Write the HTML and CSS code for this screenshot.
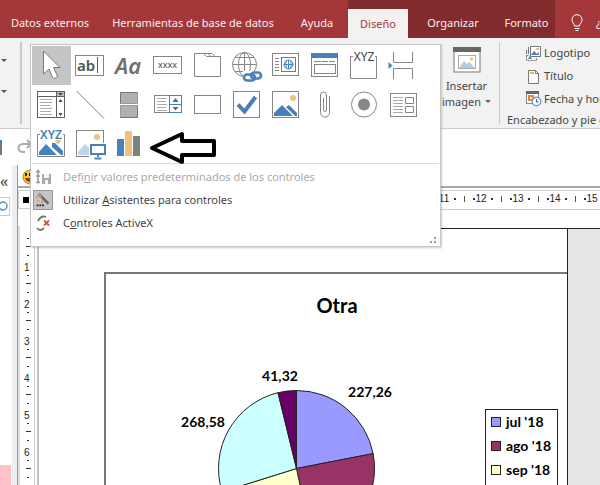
FILE: index.html
```html
<!DOCTYPE html>
<html lang="es">
<head>
<meta charset="utf-8">
<title>Diseño de informe</title>
<link rel="stylesheet" href="styles.css">
</head>
<body>
<nav class="tabs">
  <button class="tab">Datos externos</button>
  <button class="tab">Herramientas de base de datos</button>
  <button class="tab">Ayuda</button>
  <button class="tab active">Diseño</button>
  <button class="tab context">Organizar</button>
  <button class="tab context">Formato</button>
  <button class="tab tell"><svg width="12" height="18" viewBox="0 0 12 18"><path d="M3.5 12C3.5 9.500 1 9 1 5.700A5 5 0 0 1 11 5.700C11 9 8.500 9.500 8.500 12ZM3.500 14.500H8.500M4.500 16.500H7.500"/></svg><span>¿</span></button>
</nav>

<section class="ribbon">
  <div class="group-left">
    <svg width="8" height="4" viewBox="0 0 8 4"><path d="M1 0H7L4 3Z"/></svg>
    <svg width="8" height="4" viewBox="0 0 8 4"><path d="M1 0H7L4 3Z"/></svg>
  </div>
  <div></div>
  <button class="insert">
    <svg width="28" height="26" viewBox="0 0 28 26"><rect x="1" y="1" width="26" height="24" fill="#fff" stroke="#777"/><path d="M0 0H28V5H0Z" fill="#666"/><rect x="5.500" y="8.500" width="17" height="13" fill="#fff" stroke="#aaa"/><path d="M6 21L11 14L14 17L16 15L22 21Z" fill="#b5cbe3"/><circle cx="18.500" cy="12" r="1.700" fill="#edc27c"/></svg>
    <span>Insertar</span>
    <span>imagen <svg width="6" height="4" viewBox="0 0 6 4"><path d="M0 0H6L3 3Z" fill="#666"/></svg></span>
  </button>
  <div class="group-head">
    <button><svg width="17" height="17" viewBox="0 0 17 17"><path d="M5.500 1.500V11.500H15.500V1.500Z" fill="#fff" stroke="#777"/><path d="M3.500 2V9M1.500 5V9" stroke="#777" fill="none"/><path d="M6 10L9 6L12 9L14 7V10Z" fill="#4780ba"/><circle cx="12.500" cy="4" r="1.300" fill="#edb35c"/><path d="M1.500 10.500V15.500H11.500V13M1.500 10.500H4" fill="none" stroke="#777" stroke-dasharray="2 1"/><path d="M3 14L5 11L7 14Z" fill="#4780ba"/></svg>Logotipo</button>
    <button><svg width="17" height="17" viewBox="0 0 17 17"><path d="M3.500 2.500H10.500L13.500 5.500V15.500H3.500Z" fill="#fff" stroke="#777"/><path d="M10.500 2.500V5.500H13.500" fill="none" stroke="#777"/><path d="M5 4H9V6H5Z" fill="#edb35c"/></svg>Título</button>
    <button><svg width="17" height="17" viewBox="0 0 17 17"><rect x="1.500" y="2.500" width="12" height="11" fill="#fff" stroke="#888"/><path d="M1 1H14V4H1Z" fill="#666"/><rect x="4" y="6" width="4" height="4" fill="#fff" stroke="#e5843e" stroke-width="2"/><circle cx="11.500" cy="11.500" r="4.300" fill="#fff" stroke="#6f9ccb" stroke-width="1.400"/><path d="M11.500 9V12H13.500" fill="none" stroke="#555"/></svg>Fecha y hora</button>
    <p>Encabezado y pie de página</p>
  </div>
</section>

<div class="quickbar">
  <i class="chip"></i>
  <svg width="18" height="16" viewBox="0 0 18 16"><path d="M11 1L15 5L11 9M15 5H7C1 5 1 13 7 13H9" fill="none" stroke="#aaa" stroke-width="2"/></svg>
</div>

<main class="workspace">
  <aside class="pane">
    <button class="collapse" aria-label="Contraer panel">«</button>
    <div class="search"><svg width="10" height="12" viewBox="0 0 10 12"><circle cx="3" cy="6" r="4" fill="none" stroke="#5b8dc0" stroke-width="1.500"/></svg></div>
    <div class="pane-item"></div>
  </aside>
  <section class="document">
    <div class="doc-tab"><svg width="16" height="16" viewBox="0 0 16 16"><circle cx="8" cy="8" r="7" fill="#f8ca27" stroke="#b18217"/><path d="M4 4V7M8 4V7" stroke="#222" stroke-width="2"/><path d="M3 9C4 14 11 14 13 9Z" fill="#a42920"/></svg></div>
    <div class="ruler-row">
      <i class="select-box"></i>
      <div class="ruler-h"><span>11</span><span>12</span><span>13</span><span>14</span><span>15</span></div>
    </div>
    <div class="sheet">
      <div class="ruler-v"><span>&nbsp;</span><span>1</span><span>2</span><span>3</span><span>4</span><span>5</span><span>6</span></div>
      <div class="report">
        <div class="page">
          <figure class="chart">
            <h1>Otra</h1>
            <svg class="pie" width="379" height="170" viewBox="0 0 379 170">
              <g stroke="#222" stroke-width="1">
                <path d="M190.500 128.500V50.500A78 78 0 0 1 267.100 113.600Z" fill="#9999ff"/>
                <path d="M190.500 128.500L267.100 113.600A78 78 0 0 1 206.700 204.800Z" fill="#993366"/>
                <path d="M190.500 128.500L206.700 204.800A78 78 0 0 1 116.100 151.800Z" fill="#ffffcc"/>
                <path d="M190.500 128.500L116.100 151.800A78 78 0 0 1 172 52.700Z" fill="#ccffff"/>
                <path d="M190.500 128.500L172 52.700A78 78 0 0 1 190.500 50.500Z" fill="#660066"/>
              </g>
              <text x="174" y="41">41,32</text>
              <text x="264" y="57">227,26</text>
              <text x="97" y="87">268,58</text>
            </svg>
            <ul class="legend">
              <li><i class="key jul"></i>jul '18</li>
              <li><i class="key ago"></i>ago '18</li>
              <li><i class="key sep"></i>sep '18</li>
            </ul>
          </figure>
        </div>
      </div>
    </div>
  </section>
</main>

<div class="menu">
  <div class="gallery">
    <button class="on" aria-label="Seleccionar"><svg viewBox="0 0 39 39"><path d="M11.500 5V28L17 23L20.500 31.500Q23 34 25.500 30L21.500 21.500H28Z" fill="#fff" stroke="#777"/></svg></button>
    <button aria-label="Cuadro de texto"><svg viewBox="0 0 39 39"><rect class="o" x="4.500" y="9.500" width="28" height="20"/><text x="6" y="25" font-size="15" font-weight="600" fill="#555">ab</text><path class="o dark" d="M26.500 11V27"/></svg></button>
    <button aria-label="Etiqueta"><svg viewBox="0 0 39 39"><text x="5" y="28" font-size="22" font-weight="600" font-style="italic" fill="#707070">Aa</text></svg></button>
    <button aria-label="Botón"><svg viewBox="0 0 39 39"><rect class="o" x="4.500" y="10.500" width="28" height="17"/><text x="18.500" y="22" font-size="9" text-anchor="middle" fill="#444">xxxx</text></svg></button>
    <button aria-label="Control de pestaña"><svg viewBox="0 0 39 39"><path class="o" d="M6.500 30.500V7.500H15.500L18.500 10.500H32.500V30.500ZM15.500 7.500H20L23 10.500M20 7.500H24L27 10.500"/></svg></button>
    <button aria-label="Hipervínculo"><svg viewBox="0 0 39 39"><g class="o"><circle cx="17.500" cy="18.500" r="12"/><ellipse cx="17.500" cy="18.500" rx="6" ry="12"/><path d="M17.500 6.500V30M5.500 18.500H29.500M8 11.500H27M8 25.500H20"/></g><path d="M16 25H36V36H16Z" fill="#fff"/><g fill="none" stroke="#4780ba" stroke-width="2.600"><rect x="17" y="28.500" width="11" height="6" rx="3"/><rect x="24" y="26.500" width="10" height="6" rx="3"/></g></svg></button>
    <button aria-label="Explorador web"><svg viewBox="0 0 39 39"><rect class="o" x="6.500" y="7.500" width="26" height="22"/><path class="o" d="M9 12.500H13M9 15.500H13M9 18.500H13M9 21.500H13M9 24.500H13"/><rect class="b" x="15.500" y="11.500" width="14" height="14"/><circle class="b" cx="22.500" cy="18.500" r="4.500"/><path class="b" d="M22.500 14V23M18 18.500H27M20.500 15C19.500 17 19.500 20 20.500 22M24.500 15C25.500 17 25.500 20 24.500 22"/></svg></button>
    <button aria-label="Control de navegación"><svg viewBox="0 0 39 39"><rect class="o" x="6.500" y="7.500" width="26" height="23"/><path d="M6 7H33V12H6Z" fill="#4780ba"/><path class="o" d="M9 15.500H16M17 15.500H23M24 15.500H30"/><rect class="o" x="9.500" y="18.500" width="21" height="9"/></svg></button>
    <button aria-label="Grupo de opciones"><svg viewBox="0 0 39 39"><path class="o" d="M9 10.500H6.500V32.500H32.500V10.500H31"/><text x="20" y="15" font-size="12" text-anchor="middle" fill="#444">XYZ</text></svg></button>
    <button aria-label="Salto de página"><svg viewBox="0 0 39 39"><path class="o" d="M10.500 6V16.500H29.500V6M10.500 33V22.500H29.500V33"/><path d="M5.500 16L9.500 19.500L5.500 23Z" fill="#4780ba"/></svg></button>
    <button aria-label="Cuadro combinado"><svg viewBox="0 0 39 39"><rect class="o dark" x="5.500" y="6.500" width="27" height="26"/><path class="o dark" d="M5.500 11.500H32.500M24.500 6.500V32.500"/><path d="M25 7H32V11H25Z" fill="#bbb"/><path d="M26 8H31L28.500 10.500ZM26.500 17H30.500L28.500 14ZM26.500 28H30.500L28.500 31Z" fill="#444"/><path class="o soft" d="M8 14.500H20M8 17.500H20M8 20.500H18M8 23.500H20M8 26.500H19M8 29.500H20"/></svg></button>
    <button aria-label="Línea"><svg viewBox="0 0 39 39"><path class="o" d="M5.500 6L33 33.500"/></svg></button>
    <button aria-label="Botón de alternar"><svg viewBox="0 0 39 39"><path d="M10.500 7.500H27.500V18.500H10.500ZM10.500 20.500H27.500V32.500H10.500Z" fill="#b0b0b0" stroke="#999"/><path d="M10.500 18.500V7.500H27.500M10.500 32.500H27.500V20.500" fill="none" stroke="#777"/></svg></button>
    <button aria-label="Cuadro de lista"><svg viewBox="0 0 39 39"><rect class="o" x="5.500" y="10.500" width="27" height="17"/><path class="o soft" d="M8 13.500H18M8 16.500H17M8 19.500H18M8 22.500H17M8 25.500H18"/><path class="b" d="M20.500 10.500H32.500V27.500H20.500ZM20.500 19.500H32.500"/><path d="M23.500 17H29.500L26.500 13ZM23.500 22H29.500L26.500 25.500Z" fill="#666"/></svg></button>
    <button aria-label="Rectángulo"><svg viewBox="0 0 39 39"><rect class="o" x="6.500" y="10.500" width="26" height="18"/></svg></button>
    <button aria-label="Casilla"><svg viewBox="0 0 39 39"><rect class="o" x="6.500" y="6.500" width="26" height="26"/><path d="M11 19.500L17.500 26.500L28.500 12" fill="none" stroke="#4780ba" stroke-width="4"/></svg></button>
    <button aria-label="Marco de objeto"><svg viewBox="0 0 39 39"><rect class="o" x="6.500" y="6.500" width="26" height="26"/><path d="M8 31V28L16 20L27 31ZM20 22L23 20L31 28V31H29Z" fill="#4780ba"/><circle cx="27" cy="13" r="3" fill="#edc27c"/></svg></button>
    <button aria-label="Datos adjuntos"><svg viewBox="0 0 39 39"><path class="o" d="M24.500 11V27.500A4.500 4.500 0 0 1 15.500 27.500V10A3 3 0 0 1 21.500 10V25A1.500 1.500 0 0 1 18.500 25V13"/></svg></button>
    <button aria-label="Botón de opción"><svg viewBox="0 0 39 39"><circle class="o" cx="20" cy="19.500" r="12.500"/><circle cx="20" cy="19.500" r="6" fill="#888"/></svg></button>
    <button aria-label="Subformulario"><svg viewBox="0 0 39 39"><rect class="o" x="7.500" y="8.500" width="26" height="23"/><path class="o soft" d="M10 12.500H20M10 15.500H20M10 18.500H20M10 21.500H20M10 24.500H20M10 27.500H20"/><path class="o" d="M22.500 12.500H30.500V18.500H22.500ZM22.500 21.500H30.500V27.500H22.500Z"/></svg></button>
    <button aria-label="Marco independiente"><svg viewBox="0 0 39 39"><path class="o" d="M8 10.500H5.500V32.500H32.500V10.500H31"/><path d="M7 31V28L14 20L25 31ZM20 19L23 19L31 27V31H29L20 23Z" fill="#4780ba"/><path d="M23 16H29Q28 20 26 20Q24 20 23 16Z" fill="#edc27c"/><text x="19" y="15" font-size="12" font-weight="600" text-anchor="middle" fill="#4780ba">XYZ</text></svg></button>
    <button aria-label="Imagen"><svg viewBox="0 0 39 39"><rect class="o" x="5.500" y="6.500" width="27" height="26"/><path d="M7 31V28L14 20L19 25V31Z" fill="#c2d4e9"/><circle cx="26" cy="13" r="3" fill="#edc27c"/><path d="M18 19H37V36H18Z" fill="#fff"/><path d="M20 21H34V30H20ZM27 30V33M23.500 34.500H30.500" fill="none" stroke="#4780ba" stroke-width="2"/></svg></button>
    <button aria-label="Gráfico"><svg viewBox="0 0 39 39"><path d="M7 15H14V32H7Z" fill="#4780ba"/><path d="M15 7H22V32H15Z" fill="#edc27c"/><path d="M23 12H30V32H23Z" fill="#808080"/></svg></button>
  </div>
  <div class="commands">
    <button disabled><svg viewBox="0 0 20 20"><path d="M5 4V15M3 9H7M3 15.500H7" fill="none" stroke="#999" stroke-width="1.500"/><path d="M2.500 5.500L5 2L7.500 5.500Z" fill="#999"/><path d="M9 7H18V17H9Z" fill="#aaa"/><path d="M11 7H16V11H11ZM12 13H15V17H12Z" fill="#f4f4f4"/></svg><span>Defi<u>n</u>ir valores predeterminados de los controles</span></button>
    <button><svg class="on" viewBox="0 0 20 20"><path d="M5 3L16 14" stroke="#666" stroke-width="3"/><path d="M5 3L8 6" stroke="#fff"/><path d="M3 16H11" stroke="#222" stroke-width="2" stroke-dasharray="2 1"/><path d="M4 10H6V12H4ZM7 6H9V8H7ZM8 11H10V13H8ZM2 6H4V8H2Z" fill="#e5924d"/></svg><span>Utilizar <u>A</u>sistentes para controles</span></button>
    <button><svg viewBox="0 0 20 20"><path d="M5 8Q8 2 13 4M4 15Q7 19 11 15" fill="none" stroke="#777" stroke-width="1.800"/><path d="M11 7.500L16 12.500M16 7.500L11 12.500" stroke="#d65336" stroke-width="1.800"/></svg><span>C<u>o</u>ntroles ActiveX</span></button>
  </div>
  <svg class="grip" width="7" height="6" viewBox="0 0 7 6"><path d="M4 0H6V2H4ZM0 4H2V6H0ZM4 4H6V6H4Z" fill="#999"/></svg>
  <svg class="pointer" width="68" height="34" viewBox="0 0 68 34"><path d="M3 17L33 3V10H65V24H33V31Z" fill="#fff" stroke="#000" stroke-width="4" stroke-linejoin="round"/></svg>
</div>
</body>
</html>
```

FILE: styles.css
```css
* { box-sizing: border-box; }
body {
  margin: 0;
  height: 100vh;
  overflow: hidden;
  display: flex;
  flex-direction: column;
  position: relative;
  background: #fff;
  color: #444;
  font: 11px/16px "Noto Sans", "Open Sans", sans-serif;
}
button {
  border: 0;
  padding: 0;
  background: none;
  color: inherit;
  font: inherit;
  white-space: nowrap;
  text-align: left;
}
svg { display: block; flex: none; }

.tabs {
  flex: none;
  height: 38px;
  display: grid;
  grid-template-columns: 100px 186px 62px 60px 90px 57px 1fr;
  background: #a4373a;
  color: #fbeeee;
}
.tab { padding-top: 8px; text-align: center; }
.tab.context { background: #822b2d; }
.tab.active {
  background: #f3f2f1;
  color: #a4373a;
  border-top: 9px solid #822b2d;
  padding-top: 0;
}
.tab.tell {
  display: flex;
  align-items: center;
  gap: 13px;
  padding-left: 16px;
  overflow: hidden;
}
.tell path { fill: none; stroke: #fff; }

.ribbon {
  flex: none;
  height: 91px;
  display: grid;
  grid-template-columns: 22px 1fr 66px 100px;
  background: #f2f2f2;
  border-bottom: 1px solid #cfcfcf;
  overflow: hidden;
}
.group-left {
  margin: 4px 0;
  padding-top: 17px;
  display: flex;
  flex-direction: column;
  gap: 27px;
  border-right: 2px solid #c8c8c8;
  fill: #555;
}
.insert {
  margin: 4px 0;
  padding-top: 5px;
  display: flex;
  flex-direction: column;
  align-items: center;
  border-right: 1px solid #c8c8c8;
}
.insert svg { margin-bottom: 5px; }
.insert span { display: flex; align-items: center; gap: 4px; }
.insert span svg { margin: 0; }
.group-head {
  padding: 4px 0 0 7px;
  display: flex;
  flex-direction: column;
  overflow: hidden;
}
.group-head button {
  height: 23px;
  padding-left: 18px;
  display: flex;
  align-items: center;
  gap: 2px;
}
.group-head p { margin: 2px 0 0; white-space: nowrap; }

.quickbar {
  flex: none;
  height: 36px;
  display: flex;
  align-items: center;
  gap: 14px;
}
.chip { width: 2px; height: 15px; background: #777; border-top: 4px solid #4780ba; }

.workspace { flex: 1; min-height: 0; display: flex; }
.pane {
  width: 17px;
  display: flex;
  flex-direction: column;
  border-right: 5px solid #eceef1;
}
.collapse { height: 32px; font-size: 16px; line-height: 30px; }
.search {
  width: 10px;
  height: 19px;
  padding-top: 2px;
  border: 1px solid #c8c8c8;
  border-left: 0;
}
.pane-item { width: 11px; height: 20px; margin-top: auto; background: #ffc2c6; }
.document {
  flex: 1;
  min-width: 0;
  display: flex;
  flex-direction: column;
  border-left: 1px solid #8f99a8;
}
.doc-tab {
  flex: none;
  height: 23px;
  padding: 4px;
  border-bottom: 2px solid #a5aab2;
}
.ruler-row { flex: none; display: flex; height: 40px; }
.select-box {
  width: 15px;
  height: 19px;
  margin: 2px 0;
  border: 1px solid #ccc;
  background: linear-gradient(#000, #000) center / 6px 6px no-repeat;
}
.ruler-h {
  flex: 1;
  min-width: 0;
  height: 20px;
  margin-top: 2px;
  padding-left: 405px;
  display: flex;
  overflow: hidden;
  border: 1px solid #ccc;
  border-right: 0;
  color: #222;
  font: 10px/16px "Liberation Sans", sans-serif;
}
.ruler-h span {
  flex: none;
  width: 37px;
  padding-right: 27px;
  display: flex;
  justify-content: center;
  background:
    linear-gradient(#333, #333) 15px 7px / 2px 2px no-repeat,
    linear-gradient(#555, #555) 25px 5px / 1px 6px no-repeat,
    linear-gradient(#333, #333) 34px 7px / 2px 2px no-repeat;
}
.sheet { flex: 1; min-height: 0; display: flex; }
.ruler-v {
  width: 21px;
  margin-top: -2px;
  overflow: hidden;
  border-right: 2px solid #c4c4c4;
  color: #222;
  font: 10px/10px "Liberation Sans", sans-serif;
  box-shadow: inset -2px 0 #fff, inset -3px 0 #ccc, inset 2px 0 #ddd;
}
.ruler-v span {
  display: block;
  height: 37px;
  padding-left: 6px;
  background:
    linear-gradient(#333, #333) 9px 12px / 2px 1px no-repeat,
    linear-gradient(#333, #333) 8px 20px / 5px 1px no-repeat,
    linear-gradient(#333, #333) 9px 29px / 2px 1px no-repeat;
}
.report {
  flex: 1;
  min-width: 0;
  padding-right: 32px;
  background: #e5e5e5;
  border-top: 1px solid #222;
}
.page {
  height: 100%;
  padding: 43px 0 0 65px;
  background: #fff;
  border-right: 1px solid #222;
}
.chart {
  height: 100%;
  margin: 0;
  overflow: hidden;
  display: grid;
  grid-template-columns: 1fr 73px 10px;
  grid-template-rows: 66px 1fr;
  border: solid #777;
  border-width: 2px 0 0 2px;
  color: #000;
  font: bold 14px/24px Lato, "Open Sans", sans-serif;
}
.chart h1 {
  grid-column: 1 / -1;
  margin: 17px 0 0;
  text-align: center;
  font-size: 20px;
  line-height: 28px;
}
.pie text { text-anchor: middle; }
.legend {
  margin: 69px 0 0;
  padding: 0 0 0 5px;
  list-style: none;
  border: 1px solid #222;
  border-bottom: 0;
}
.legend li { display: flex; align-items: center; gap: 5px; white-space: nowrap; }
.key { width: 10px; height: 10px; border: 1px solid #222; }
.jul { background: #9999ff; }
.ago { background: #993366; }
.sep { background: #ffffcc; }

.menu {
  position: absolute;
  left: 30px;
  top: 44px;
  padding: 1px;
  background: #fff;
  border: 1px solid #c6c6c6;
  box-shadow: 1px 1px 2px #0003;
}
.gallery {
  width: 407px;
  display: grid;
  grid-template-columns: repeat(10, 39px);
  border-bottom: 1px solid #ddd;
}
.gallery button { height: 39px; }
.gallery svg { width: 39px; height: 39px; }
.gallery .on { background: #c5c5c5; }
.o { fill: none; stroke: #858585; }
.dark { stroke: #606060; }
.soft { stroke: #aaa; }
.b { fill: none; stroke: #4780ba; }
.commands { padding: 1px 0 11px 1px; }
.commands button {
  height: 23px;
  display: flex;
  align-items: center;
  gap: 10px;
}
.commands button:disabled { color: #aaa; }
.commands svg { width: 20px; height: 20px; }
.commands svg.on { background: #c5c5c5; border: 1px solid #999; }
.grip { position: absolute; right: 3px; bottom: 3px; }
.pointer { position: absolute; left: 118px; top: 86px; }
```
